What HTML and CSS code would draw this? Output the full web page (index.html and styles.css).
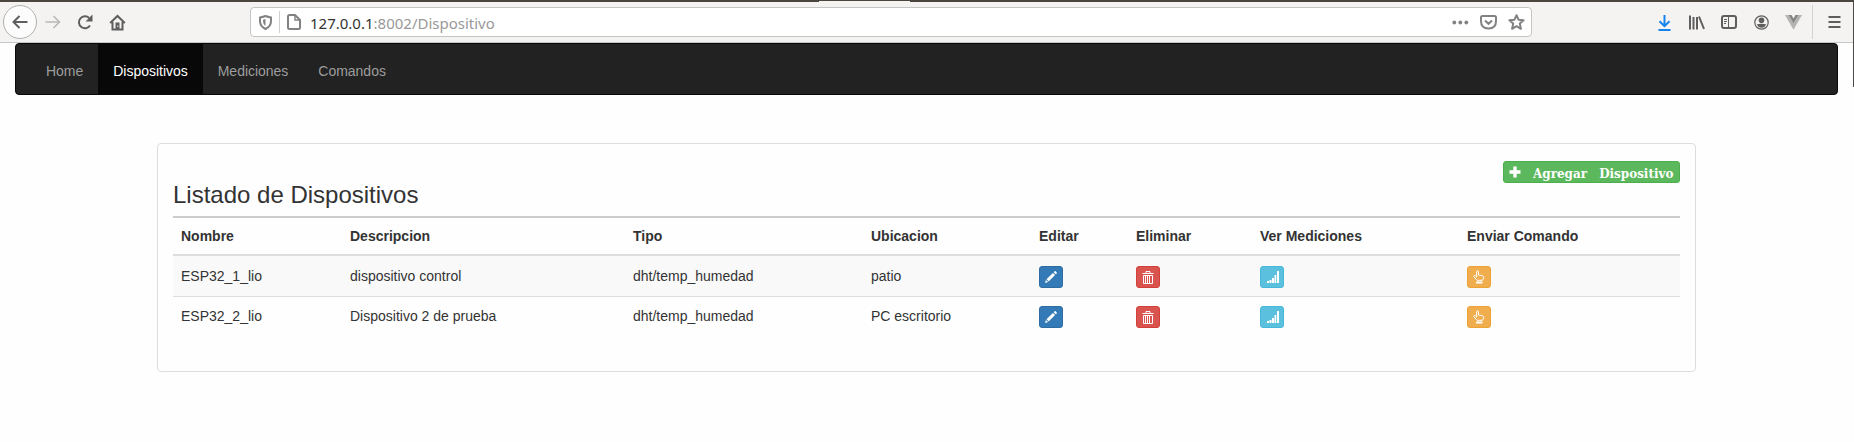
FILE: index.html
```
<!DOCTYPE html>
<html lang="es">
<head>
<meta charset="utf-8">
<title>Dispositivos</title>
<link rel="stylesheet" href="styles.css">
</head>
<body>
<svg class="defs" width="0" height="0">
  <symbol id="pencil" viewBox="0 0 12 12"><path fill="currentColor" d="M0 12l.9-3.100 2.200 2.200zM1.500 8.300L7.900 1.900l2.200 2.200-6.400 6.400zM8.700 1.300l.9-1q.5-.5 1 0l1.100 1.100q.5.5 0 1l-1 .9z"/></symbol>
  <symbol id="trash" viewBox="0 0 12 13"><path fill="none" stroke="currentColor" d="M.5 2.500h11M4 2V.5h4V2M1.500 4.500h9v8h-9zM3.500 5v7M5.500 5v7M7.500 5v7"/></symbol>
  <symbol id="signal" viewBox="0 0 12 12"><path fill="currentColor" d="M0 10h2v2H0zM2.500 9h2v3h-2zM5 7h2v5H5zM7.500 4h1.800v8H7.500zM10 0h2v12h-2z"/></symbol>
  <symbol id="hand" viewBox="0 0 12 14"><path fill="none" stroke="currentColor" stroke-linejoin="round" d="M3.700 7.500V1.800Q3.700.6 4.600.6t.9 1.200V5l4 .8q1.500.4 1.300 1.800L9.500 10.300H4L1 7q-.6-.9.300-1.500.8-.5 2.200 1.300"/><path fill="currentColor" d="M3 11.500h6.500v2H3z"/></symbol>
</svg>

<header class="toolbar">
  <div class="tabnotch"></div>
  <nav class="controls">
    <span class="back"><svg width="18" height="16" viewBox="0 0 18 16"><path class="line" d="M16.500 8H3M8.500 2L2.500 8l6 6"/></svg></span>
    <svg class="forward" width="18" height="16" viewBox="0 0 18 16"><path class="line thin" d="M1.500 8H15M9.500 2l6 6-6 6"/></svg>
    <svg class="reload" width="17" height="16" viewBox="0 0 17 16"><path class="line" d="M13 11.500A6 6 0 1 1 12.200 4"/><path fill="currentColor" d="M15.500.5v7h-7z"/></svg>
    <svg class="home" width="17" height="17" viewBox="0 0 17 17"><path class="line" d="M1.200 9L8.500 2l7.300 7M3.500 8v7.500h10V8"/><path fill="currentColor" d="M6.500 8.500h4V15h-4z"/><path fill="#f4f3f2" d="M8.300 11.500h1v1.500h-1z"/></svg>
  </nav>
  <div class="urlbar">
    <svg class="shield" width="13" height="15" viewBox="0 0 13 15"><path class="line" d="M1 2.500Q4 2 6.500 1q2.500 1 5.500 1.500V6q0 5.500-5.500 8Q1 11.500 1 6z"/><path fill="currentColor" d="M6.500 4v7Q4 9.500 4 6V4.700z"/></svg>
    <span class="rule"></span>
    <svg class="page" width="14" height="16" viewBox="0 0 14 16"><path class="line" d="M1 2.500Q1 1 2.500 1H8l5 5v7.500q0 1.500-1.500 1.500h-9Q1 15 1 13.500z"/><path fill="none" stroke="currentColor" stroke-width="1.400" d="M8 1v5h5"/></svg>
    <span class="url"><span class="host">127.0.0.1</span><span class="path">:8002/Dispositivo</span></span>
    <svg class="dots" width="17" height="5" viewBox="0 0 17 5"><g fill="currentColor"><circle cx="2.300" cy="2.500" r="1.900"/><circle cx="8.300" cy="2.500" r="1.900"/><circle cx="14.300" cy="2.500" r="1.900"/></g></svg>
    <svg class="pocket" width="17" height="15" viewBox="0 0 17 15"><path class="line" d="M2.500 1h12Q16 1 16 2.500V6q0 7.500-7.500 7.500T1 6V2.500Q1 1 2.500 1zM5 5.500l3.500 3.300L12 5.500"/></svg>
    <svg class="star" width="17" height="16" viewBox="0 0 17 16"><path class="line" stroke-linejoin="round" d="M8.500 1.200l2 4.500 5.100.5-3.800 3.400 1.100 5.200-4.400-2.600-4.400 2.600 1.100-5.200-3.800-3.400 5.100-.5z"/></svg>
  </div>
  <div class="tools">
    <svg class="download" width="13" height="17" viewBox="0 0 13 17"><path class="line" d="M6.500 1v11M1.500 7.200l5 5 5-5M.5 16h12"/></svg>
    <svg class="library" width="16" height="15" viewBox="0 0 16 15"><path class="line" d="M1 .5v14M4.500 2v12.500M8 2v12.500M10 1.500l5 12.500"/></svg>
    <svg class="sidebar" width="16" height="14" viewBox="0 0 16 14"><rect class="line" x="1" y="1" width="14" height="12" rx="2"/><path fill="none" stroke="currentColor" d="M7.500 1v12M3 4.500h3M3 6.500h3M3 8.500h2"/></svg>
    <svg class="account" width="15" height="15" viewBox="0 0 15 15"><circle cx="7.500" cy="7.500" r="6.700" fill="none" stroke="currentColor" stroke-width="1.200"/><circle cx="7.500" cy="5.300" r="2.800" fill="currentColor"/><path fill="currentColor" d="M2.800 9.300Q7.500 8 12.200 9.300 10.500 12.800 7.500 12.800T2.800 9.300z"/></svg>
    <svg class="vue" width="17" height="15" viewBox="0 0 17 15"><path fill="#b4b4b3" d="M0 0h3.500l5 8.500 5-8.500H17L8.500 14.700z"/><path fill="#858585" d="M3.500 0h3l2 3.500 2-3.500h3l-5 8.500z"/></svg>
    <span class="separator"></span>
    <svg class="menu" width="13" height="12" viewBox="0 0 13 12"><path class="line" d="M.5 1h12M.5 6h12M.5 11h12"/></svg>
  </div>
</header>

<div class="window-edge"></div>

<nav class="navbar">
  <a>Home</a><a class="active">Dispositivos</a><a>Mediciones</a><a>Comandos</a>
</nav>

<main class="panel">
  <div class="panel-actions">
    <button class="btn btn-add"><svg width="12" height="12" viewBox="0 0 12 12"><path fill="currentColor" d="M4.300.5h3.400v3.800h3.800v3.400H7.700v3.800H4.300V7.700H.5V4.300h3.800z"/></svg><span>Agregar Dispositivo</span></button>
  </div>
  <h3>Listado de Dispositivos</h3>
  <table>
    <colgroup><col class="c-name"><col class="c-desc"><col class="c-type"><col class="c-place"><col class="c-edit"><col class="c-delete"><col class="c-view"><col></colgroup>
    <thead>
      <tr><th>Nombre</th><th>Descripcion</th><th>Tipo</th><th>Ubicacion</th><th>Editar</th><th>Eliminar</th><th>Ver Mediciones</th><th>Enviar Comando</th></tr>
    </thead>
    <tbody>
      <tr>
        <td>ESP32_1_lio</td><td>dispositivo control</td><td>dht/temp_humedad</td><td>patio</td>
        <td><button class="btn edit"><svg width="12" height="12"><use href="#pencil"/></svg></button></td>
        <td><button class="btn delete"><svg width="12" height="13"><use href="#trash"/></svg></button></td>
        <td><button class="btn view"><svg width="12" height="12"><use href="#signal"/></svg></button></td>
        <td><button class="btn send"><svg width="12" height="14"><use href="#hand"/></svg></button></td>
      </tr>
      <tr>
        <td>ESP32_2_lio</td><td>Dispositivo 2 de prueba</td><td>dht/temp_humedad</td><td>PC escritorio</td>
        <td><button class="btn edit"><svg width="12" height="12"><use href="#pencil"/></svg></button></td>
        <td><button class="btn delete"><svg width="12" height="13"><use href="#trash"/></svg></button></td>
        <td><button class="btn view"><svg width="12" height="12"><use href="#signal"/></svg></button></td>
        <td><button class="btn send"><svg width="12" height="14"><use href="#hand"/></svg></button></td>
      </tr>
    </tbody>
  </table>
</main>
</body>
</html>
```
FILE: styles.css
```
* { box-sizing: border-box; }
body {
  margin: 0;
  height: 442px;
  overflow: hidden;
  background: #fefefe;
  color: #333;
  font: 14px/20px "Liberation Sans", Arial, sans-serif;
}
svg { display: block; flex: none; }
.defs { position: absolute; }
.line { fill: none; stroke: currentColor; stroke-width: 2; }
.thin { stroke-width: 1.6; }

/* Browser toolbar */
.toolbar {
  position: relative;
  display: flex;
  align-items: center;
  height: 43px;
  padding: 0 13px 0 3px;
  border-top: 2px solid #4a463f;
  border-bottom: 1px solid #c6c6c4;
  background: #f4f3f2;
  color: #5e5e5e;
}
.tabnotch {
  position: absolute;
  top: -1px;
  left: 819px;
  width: 91px;
  height: 1px;
  background: #f4f3f2;
}
.controls { display: flex; align-items: center; width: 247px; }
.back {
  display: flex;
  align-items: center;
  justify-content: center;
  width: 34px;
  height: 34px;
  border: 1px solid #b1b1b0;
  border-radius: 50%;
  background: #fcfcfc;
}
.forward { margin-left: 7px; color: #b9b9b8; }
.reload { margin-left: 15px; }
.home { margin-left: 15px; }
.urlbar {
  display: flex;
  align-items: center;
  width: 1282px;
  height: 30px;
  padding: 0 6px 0 8px;
  border: 1px solid #c4c4c3;
  border-radius: 4px;
  background: #fff;
  color: #828282;
}
.rule { width: 1px; height: 22px; margin: 0 7px 0 7px; background: #cfcfcf; }
.url {
  flex: 1;
  margin: 1px 0 0 9px;
  font: 15px/20px "Noto Sans", sans-serif;
  white-space: nowrap;
}
.host { color: #333; }
.path { color: #999; }
.pocket { margin-left: 11px; }
.star { margin-left: 11px; }
.tools { display: flex; align-items: center; margin-left: auto; }
.download { color: #1583ec; }
.library { margin-left: 18px; }
.sidebar { margin-left: 16px; }
.account { margin-left: 17px; }
.vue { margin-left: 16px; }
.separator { width: 1px; height: 34px; margin: 0 15px 0 10px; background: #d2d2d0; }
.window-edge {
  position: absolute;
  top: 0;
  right: 0;
  width: 1px;
  height: 87px;
  background: #4b4a48;
}

/* Site navigation */
.navbar {
  display: flex;
  height: 52px;
  margin: 0 16px 0 15px;
  padding-left: 15px;
  border: 1px solid #080808;
  border-radius: 4px;
  background: #222;
}
.navbar a { padding: 17px 15px 13px; color: #9d9d9d; letter-spacing: -.02px; }
.navbar .active { background: #080808; color: #fff; }

/* Device list */
.panel {
  width: 1539px;
  height: 229px;
  margin: 48px 0 0 157px;
  padding: 17px 15px 0;
  border: 1px solid #ddd;
  border-radius: 4px;
}
.panel-actions { display: flex; justify-content: flex-end; }
h3 { margin: -1px 0 8px; font-size: 24px; font-weight: 400; line-height: 26px; }
.btn {
  display: flex;
  align-items: center;
  justify-content: center;
  width: 24px;
  height: 22px;
  padding: 0;
  border: 1px solid;
  border-radius: 3px;
}
.btn svg { color: #fff; }
.btn-add {
  justify-content: flex-start;
  width: 177px;
  padding-left: 5px;
  border-color: #4cae4c;
  background: #5cb85c;
  color: #fff;
  font: bold 13.3px/18px "DejaVu Serif Condensed", "DejaVu Serif", serif;
  white-space: nowrap;
  word-spacing: 8px;
}
.btn-add span { margin: 3px 0 0 12px; }
.edit { border-color: #2e6da4; background: #337ab7; }
.delete { border-color: #d43f3a; background: #d9534f; }
.view { border-color: #46b8da; background: #5bc0de; }
.send { border-color: #eea236; background: #f0ad4e; }
.view svg { margin-left: 2px; }

table {
  width: 1507px;
  border-top: 2px solid #ccc;
  border-collapse: separate;
  border-spacing: 0;
  table-layout: fixed;
}
.c-name { width: 169px; }
.c-desc { width: 283px; }
.c-type { width: 238px; }
.c-place { width: 168px; }
.c-edit { width: 97px; }
.c-delete { width: 124px; }
.c-view { width: 207px; }
th { padding: 8px 8px; border-bottom: 2px solid #ddd; text-align: left; }
td { height: 38px; padding: 0 8px; }
td .btn { margin-top: 2px; }
tbody tr:first-child td { height: 41px; border-bottom: 1px solid #ddd; background: #f9f9f9; }
```
